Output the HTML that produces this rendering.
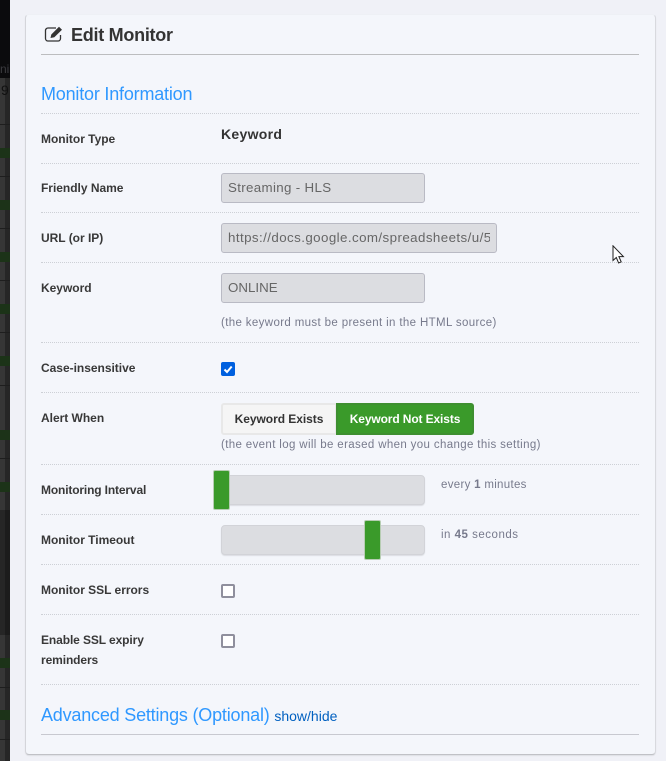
<!DOCTYPE html>
<html><head><meta charset="utf-8"><style>
html,body{margin:0;padding:0}
body{width:666px;height:761px;overflow:hidden;position:relative;background:#f0f1f7;font-family:"Liberation Sans",sans-serif;color:#333}
div,svg{position:absolute}
.card{left:25px;top:14px;width:631px;height:741px;box-sizing:border-box;background:#f4f6fb;border-radius:4px;border:1px solid #eef0f5;border-left:1px solid #d4d5da;border-right:1px solid #d8d9de;border-bottom:1px solid #c0c1c6;box-shadow:0 1px 1px rgba(0,0,0,.08)}
.dot{left:41px;width:598px;height:0;border-top:1px dotted #cdd0d6}
.l{left:41px;font-size:12px;font-weight:bold;letter-spacing:-.02px;color:#383838;line-height:20px;white-space:nowrap}
.inp{left:221px;height:30px;box-sizing:border-box;background:#dcdde1;border:1px solid #b9bac4;border-radius:3px;font-size:13.33px;line-height:28px;color:#666;padding-left:6px;overflow:hidden;white-space:nowrap}
.h{left:221px;font-size:11.5px;color:#777a8c;white-space:nowrap;letter-spacing:.36px;line-height:14px}
.cb{left:221px;width:14px;height:14px;box-sizing:border-box;background:#fff;border:2px solid #8f8f9d;border-radius:2px}
.tr{left:221px;width:204px;height:30px;box-sizing:border-box;background:#dcdde1;border:1px solid #d2d3d8;border-radius:4px;box-shadow:0 1px 1px rgba(0,0,0,.1)}
.th{width:17px;height:40px;box-sizing:border-box;background:#3a9a2a;border:1px solid #b7cdb3;border-radius:2px}
.blue{color:#2f98ff;left:41px;white-space:nowrap;letter-spacing:-.2px}
.g{left:0;width:10px;height:10px;background:#1c3318}
.r{left:0;width:10px;height:1px;background:#1e1e1e}
</style></head><body>
<div style="left:0;top:0;width:5px;height:761px;background:#363636"></div>
<div style="left:5px;top:0;width:5px;height:761px;background:#262626"></div>
<div style="left:0;top:0;width:10px;height:78px;background:#0b0b0d"></div>
<div style="left:0;top:510px;width:5px;height:125px;background:#262626"></div>
<div style="left:5px;top:510px;width:5px;height:125px;background:#1c1c1c"></div>
<div style="left:1px;top:82px;font-size:14px;line-height:16px;color:#111;width:9px;overflow:hidden">9</div>
<div style="left:0;top:62px;font-size:12px;line-height:14px;color:#3c3c40;width:10px;overflow:hidden">ni</div>
<div class="g" style="top:148px"></div><div class="g" style="top:200px"></div><div class="g" style="top:252px"></div><div class="g" style="top:304px"></div><div class="g" style="top:356px"></div><div class="g" style="top:430px"></div><div class="g" style="top:482px"></div><div class="g" style="top:658px"></div><div class="g" style="top:710px"></div>
<div class="r" style="top:124px"></div><div class="r" style="top:176px"></div><div class="r" style="top:228px"></div><div class="r" style="top:280px"></div><div class="r" style="top:332px"></div><div class="r" style="top:385px"></div><div class="r" style="top:458px"></div><div class="r" style="top:687px"></div><div class="r" style="top:739px"></div>
<div class="card"></div>

<svg style="left:44px;top:25px" width="21" height="18" viewBox="0 0 21 18"><path d="M12 3H4a2.500 2.500 0 0 0-2.500 2.500v8A2.500 2.500 0 0 0 4 16h10a2.500 2.500 0 0 0 2.500-2.500V10" fill="none" stroke="#333" stroke-width="1.300"/><path d="M6.500 13l.8-3.500L15 1.800l3 3-7.700 7.500z" fill="#333"/></svg>
<div style="left:71px;top:24px;font-size:18px;font-weight:bold;line-height:22px;color:#333;white-space:nowrap;letter-spacing:-.27px">Edit Monitor</div>
<div style="left:41px;top:54px;width:598px;height:1px;background:#bcbdbf"></div>

<div class="blue" style="top:83px;font-size:18px;line-height:22px">Monitor Information</div>
<div class="dot" style="top:113px"></div>
<div class="l" style="top:129px">Monitor Type</div>
<div style="left:221px;top:125px;font-size:14px;font-weight:bold;letter-spacing:.3px;line-height:18px;color:#333">Keyword</div>
<div class="dot" style="top:163px"></div>
<div class="l" style="top:178px">Friendly Name</div>
<div class="inp" style="top:173px;width:204px;letter-spacing:.33px">Streaming - HLS</div>
<div class="dot" style="top:212px"></div>
<div class="l" style="top:228px">URL (or IP)</div>
<div class="inp" style="top:223px;width:276px"><span style="display:block;width:262px;overflow:hidden;letter-spacing:.42px">https://docs.google.com/spreadsheets/u/5</span></div>
<div class="dot" style="top:262px"></div>
<div class="l" style="top:278px">Keyword</div>
<div class="inp" style="top:273px;width:204px">ONLINE</div>
<div class="h" style="top:316px">(the keyword must be present in the HTML source)</div>
<div class="dot" style="top:342px"></div>
<div class="l" style="top:358px">Case-insensitive</div>
<div class="cb" style="top:362px;background:#0060df;border:0;border-radius:2px"></div>
<svg style="left:221px;top:362px" width="14" height="14" viewBox="0 0 14 14"><path d="M3.500 7.500l2.500 2.500 4.700-5.500" fill="none" stroke="#fff" stroke-width="2"/></svg>
<div class="dot" style="top:392px"></div>
<div class="l" style="top:408px">Alert When</div>
<div style="left:221px;top:403px;width:116px;height:32px;box-sizing:border-box;background:#f5f5f5;border:2px solid #e8e8e8;border-radius:3px 0 0 3px;font-size:12px;font-weight:bold;letter-spacing:-.04px;line-height:28px;text-align:center;color:#333">Keyword Exists</div>
<div style="left:336px;top:403px;width:138px;height:32px;box-sizing:border-box;background:#3a9a2a;border:2px solid #3e8f30;border-radius:0 3px 3px 0;font-size:12px;font-weight:bold;letter-spacing:-.12px;line-height:28px;text-align:center;color:#fff">Keyword Not Exists</div>
<div class="h" style="top:438px">(the event log will be erased when you change this setting)</div>
<div class="dot" style="top:464px"></div>
<div class="l" style="top:480px;letter-spacing:-.15px">Monitoring Interval</div>
<div class="tr" style="top:475px"></div>
<div class="th" style="left:213px;top:470px"></div>
<div class="h" style="left:441px;top:478px;letter-spacing:.3px">every <b>1</b> minutes</div>
<div class="dot" style="top:514px"></div>
<div class="l" style="top:530px">Monitor Timeout</div>
<div class="tr" style="top:525px"></div>
<div class="th" style="left:364px;top:520px"></div>
<div class="h" style="left:441px;top:528px;letter-spacing:.5px">in <b>45</b> seconds</div>
<div class="dot" style="top:564px"></div>
<div class="l" style="top:580px">Monitor SSL errors</div>
<div class="cb" style="top:584px"></div>
<div class="dot" style="top:614px"></div>
<div class="l" style="top:630px;letter-spacing:-.1px">Enable SSL expiry<br>reminders</div>
<div class="cb" style="top:634px"></div>
<div class="dot" style="top:684px"></div>
<div class="blue" style="top:704px;font-size:18px;line-height:22px">Advanced Settings (Optional) <span style="font-size:14px;color:#0060c0;letter-spacing:0">show/hide</span></div>
<div style="left:41px;top:734px;width:598px;height:1px;background:#c8c9d0"></div>

<svg style="left:612px;top:245px" width="14" height="20" viewBox="0 0 14 20"><path d="M1 .8V15.500l3.300-3 2.300 5.500 2.600-1.100-2.300-5.300h4.500z" fill="#fff" stroke="#222" stroke-width="1"/></svg>
</body></html>
